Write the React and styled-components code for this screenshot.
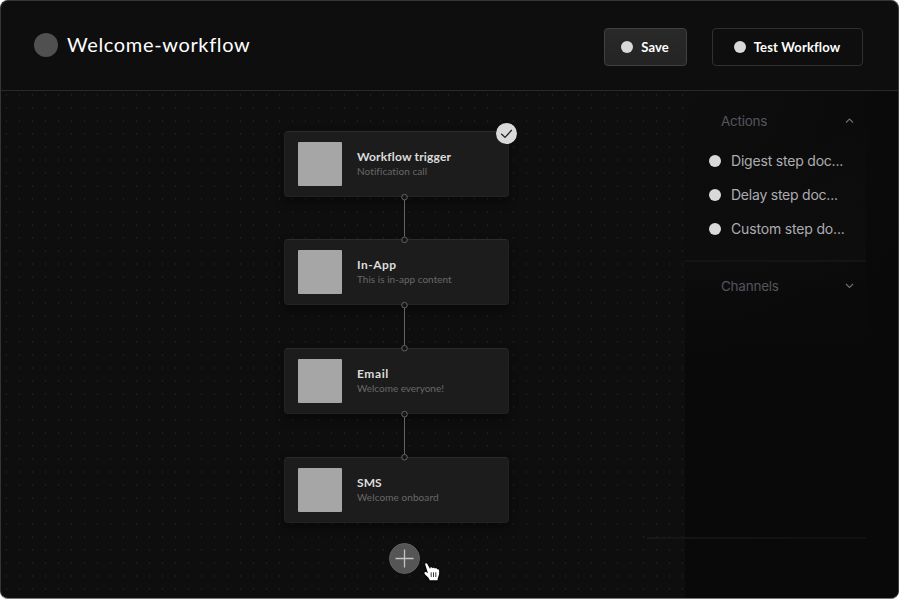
import React from "react";
import styled, { createGlobalStyle } from "styled-components";

const GlobalStyle = createGlobalStyle`
  * { box-sizing: border-box; }
  body { margin: 0; background: #fff; }
`;

const Window = styled.div`
  position: relative;
  width: 899px;
  height: 599px;
  display: flex;
  flex-direction: column;
  overflow: hidden;
  background: #0e0e0e;
  border: 1px solid #343636;
  border-right-color: #3c3e3e;
  border-bottom-color: #777;
  border-radius: 8px;
  font-family: Lato, "Liberation Sans", sans-serif;
`;

const Header = styled.header`
  display: flex;
  align-items: center;
  flex: none;
  height: 90px;
  padding: 0 35px 0 33px;
  border-bottom: 1px solid #292929;
`;

const Avatar = styled.span`
  width: 24px;
  height: 24px;
  margin-bottom: 2px;
  border-radius: 50%;
  background: #505050;
`;

const Title = styled.h1`
  flex: 1;
  margin: 0 0 4px 9px;
  font-size: 20px;
  line-height: 24px;
  font-weight: 400;
  letter-spacing: 0.65px;
  color: #fff;
`;

const Button = styled.button`
  display: flex;
  align-items: center;
  justify-content: center;
  gap: 8px;
  width: ${(p) => p.$width}px;
  height: 38px;
  margin: 2px 0 0 ${(p) => (p.$filled ? 0 : 25)}px;
  padding: 0 1px 0 0;
  border: 1px solid ${(p) => (p.$filled ? "#414141" : "#303030")};
  border-radius: 4px;
  background: ${(p) => (p.$filled ? "linear-gradient(#292929, #242424)" : "transparent")};
  color: #fff;
  font: 700 13px/18px Lato, sans-serif;
  letter-spacing: ${(p) => p.$tracking}px;
`;

const Dot = styled.span`
  flex: none;
  width: 12px;
  height: 12px;
  border-radius: 50%;
  background: #d9d9d9;
`;

const Main = styled.main`
  display: flex;
  flex: 1;
  min-height: 0;
`;

const Canvas = styled.section`
  display: flex;
  flex-direction: column;
  align-items: flex-start;
  width: 684px;
  padding: 40px 0 0 283px;
  background: conic-gradient(from 90deg at 12px 11px, #202020 25%, transparent 0) -7px -8px / 13px 13px;
`;

const Card = styled.article`
  position: relative;
  display: flex;
  align-items: center;
  width: 225px;
  height: 66px;
  padding: 0 13px;
  border: 1px solid #222;
  border-top-color: #2b2b2b;
  border-radius: 4px;
  background: #1c1c1c;
  box-shadow: 0 5px 10px rgba(0, 0, 0, 0.4);
`;

const Tile = styled.span`
  width: 44px;
  height: 44px;
  margin-left: -0.5px;
  border-radius: 1px;
  background: #a6a6a6;
`;

const CardText = styled.div`
  margin: -2px 0 0 15.5px;
  white-space: nowrap;
`;

const CardTitle = styled.h2`
  margin: 0;
  font-size: 12px;
  line-height: 16px;
  font-weight: 700;
  letter-spacing: ${(p) => p.$tracking}px;
  color: #dcdcdc;
`;

const CardNote = styled.p`
  margin: 0;
  font-size: 10px;
  line-height: 13px;
  letter-spacing: ${(p) => p.$tracking}px;
  color: #686868;
`;

const Check = styled.span`
  position: absolute;
  top: -9px;
  right: -9px;
  width: 21px;
  height: 21px;
  border-radius: 50%;
  background: #dadada;
  svg { display: block; }
`;

const Link = styled.svg`
  position: relative;
  z-index: 1;
  display: block;
  flex: none;
  margin-left: 116px;
  overflow: visible;
`;

const AddButton = styled.button`
  display: flex;
  align-items: center;
  justify-content: center;
  width: 31px;
  height: 31px;
  margin: 20px 0 0 105px;
  padding: 0;
  border: 1px solid #606060;
  border-radius: 50%;
  background: #555;
  flex: none;
`;

const Cursor = styled.svg`
  position: absolute;
  left: 422px;
  top: 560px;
  filter: drop-shadow(0 1px 1px #000);
`;

const Side = styled.aside`
  flex: 1;
  background: radial-gradient(circle at 0 0, #0e0e0e 0, #090909 270px);
`;

const Group = styled.section`
  width: 181px;
  height: ${(p) => p.$height}px;
  padding-top: ${(p) => p.$top}px;
  border-bottom: ${(p) => (p.$divided ? "2px solid #141414" : "0")};
  background: ${(p) =>
    p.$divided
      ? "linear-gradient(160deg, transparent 35%, rgba(255, 255, 255, 0.015))"
      : "linear-gradient(rgba(255, 255, 255, 0.008), transparent)"};
`;

const GroupHead = styled.div`
  display: flex;
  align-items: center;
  justify-content: space-between;
  height: 20px;
  padding: 0 12px 0 36px;
  font: 400 13.5px/20px Inter, sans-serif;
  letter-spacing: ${(p) => p.$tracking}px;
  color: #55545d;
`;

const StepList = styled.ul`
  display: flex;
  flex-direction: column;
  gap: 14px;
  margin: 20px 0 0;
  padding: 0 0 0 24px;
  list-style: none;
`;

const Step = styled.li`
  display: flex;
  align-items: center;
  gap: 10px;
  height: 20px;
  white-space: nowrap;
  font: 400 14px/20px Inter, sans-serif;
  letter-spacing: ${(p) => p.$tracking}px;
  color: #adacb2;
`;

const FooterRule = styled.span`
  position: absolute;
  left: 646px;
  top: 536px;
  width: 219px;
  height: 2px;
  background: linear-gradient(90deg, #191919, #141414 25%, #101010);
`;

const nodes = [
  { title: "Workflow trigger", note: "Notification call", tt: 0.17, nt: 0.08, checked: true, link: 42 },
  { title: "In-App", note: "This is in-app content", tt: 0.5, nt: 0.02, link: 43 },
  { title: "Email", note: "Welcome everyone!", tt: 0.6, nt: -0.02, link: 43 },
  { title: "SMS", note: "Welcome onboard", tt: 0.1, nt: 0.08 },
];

const steps = [
  { label: "Digest step doc...", tracking: -0.2 },
  { label: "Delay step doc...", tracking: -0.23 },
  { label: "Custom step do...", tracking: -0.17 },
];

function Connector({ length }) {
  return (
    <Link width="9" height={length} fill="#151515" stroke="#63616a">
      <path d={`M4.5 3V${length - 2.5}`} />
      <circle cx="4.5" cy="0.2" r="2.8" />
      <circle cx="4.5" cy={length === 42 ? 42.8 : 43.2} r="2.8" />
    </Link>
  );
}

function Chevron({ up }) {
  return (
    <svg width="9" height="6" viewBox="0 0 9 6" fill="none" stroke="#706f77" strokeWidth="1.1">
      <path d={up ? "M1 4.5 4.5 1 8 4.5" : "M1 1 4.5 4.5 8 1"} />
    </svg>
  );
}

export default function App() {
  return (
    <>
      <GlobalStyle />
      <Window>
        <Header>
          <Avatar />
          <Title>Welcome-workflow</Title>
          <Button $filled $width={83} $tracking={0.1}><Dot />Save</Button>
          <Button $width={151} $tracking={0.15}><Dot />Test Workflow</Button>
        </Header>
        <Main>
          <Canvas>
            {nodes.map((n) => (
              <React.Fragment key={n.title}>
                <Card>
                  <Tile />
                  <CardText>
                    <CardTitle $tracking={n.tt}>{n.title}</CardTitle>
                    <CardNote $tracking={n.nt}>{n.note}</CardNote>
                  </CardText>
                  {n.checked && (
                    <Check>
                      <svg width="21" height="21" fill="none" stroke="#222" strokeWidth="1.3">
                        <path d="M5.2 10.8 9 14.4 15.8 7" />
                      </svg>
                    </Check>
                  )}
                </Card>
                {n.link && <Connector length={n.link} />}
              </React.Fragment>
            ))}
            <AddButton aria-label="Add step">
              <svg width="19" height="19" stroke="#c4c4c4" strokeWidth="1.3">
                <path d="M9.5 .5V18.5M.5 9.5H18.5" />
              </svg>
            </AddButton>
          </Canvas>
          <Side>
            <Group $height={171} $top={20} $divided>
              <GroupHead $tracking={-0.25}>Actions<Chevron up /></GroupHead>
              <StepList>
                {steps.map((s) => (
                  <Step key={s.label} $tracking={s.tracking}><Dot />{s.label}</Step>
                ))}
              </StepList>
            </Group>
            <Group $height={110} $top={14}>
              <GroupHead $tracking={-0.25}>Channels<Chevron /></GroupHead>
            </Group>
          </Side>
        </Main>
        <FooterRule />
        <Cursor width="18" height="21" viewBox="0 0 18 21">
          <path
            d="M2.2 3.6C1.9 2.2 3.6 1.7 4.3 3L7.2 8.2 7.1 6.9C7.6 6 9 6.3 9.4 7.2 10.1 6.4 11.5 6.6 11.9 7.6 12.8 7 14 7.4 14.2 8.4 15.2 8.1 16 8.7 16.1 9.7V12.5C16 14.5 14.8 16 14.5 19.2H6.7C6.3 16.5 2.9 14.8 1.6 12.7 1 11.2 2.3 10.4 3.5 11.2L5 12.3Z"
            fill="#fff"
          />
          <path d="M8.2 11.3V16M10.5 11.3V16M12.8 11.3V16" stroke="#222" strokeWidth=".9" />
        </Cursor>
      </Window>
    </>
  );
}
